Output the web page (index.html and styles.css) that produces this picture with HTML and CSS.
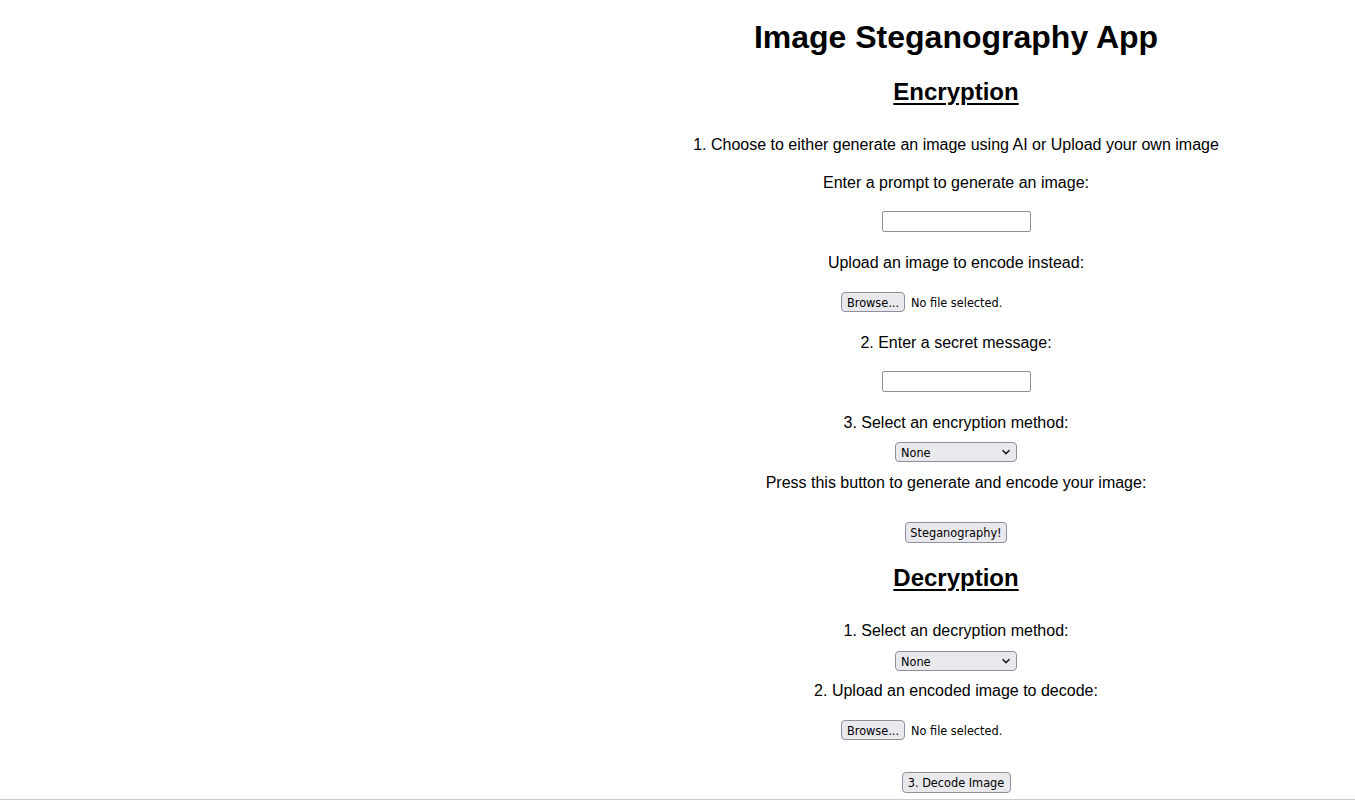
FILE: index.html
```html
<!DOCTYPE html>
<html lang="en">
<head>
<meta charset="utf-8">
<title>Image Steganography App</title>
<link rel="stylesheet" href="styles.css">
</head>
<body>
<div class="page">
  <div class="preview"></div>
  <main class="panel">
    <h1 class="title">Image Steganography App</h1>

    <h2 class="section s-enc">Encryption</h2>
    <p class="txt t1">1. Choose to either generate an image using AI or Upload your own image</p>
    <p class="txt t2">Enter a prompt to generate an image:</p>
    <input class="textbox tb1" type="text">
    <p class="txt t3">Upload an image to encode instead:</p>
    <div class="file f1"><button class="ctl fbtn" type="button">Browse...</button><span class="fname">No file selected.</span></div>
    <p class="txt t4">2. Enter a secret message:</p>
    <input class="textbox tb2" type="text">
    <p class="txt t5">3. Select an encryption method:</p>
    <div class="selwrap sw1">
      <select class="ctl sel"><option>None</option></select>
      <svg class="chev" width="10" height="6" viewBox="0 0 10 6"><path d="M1.5 1.2 L5 4.6 L8.5 1.2" fill="none" stroke="#1c1b22" stroke-width="1.6"/></svg>
    </div>
    <p class="txt t6">Press this button to generate and encode your image:</p>
    <button class="ctl btn b1" type="button">Steganography!</button>

    <h2 class="section s-dec">Decryption</h2>
    <p class="txt t7">1. Select an decryption method:</p>
    <div class="selwrap sw2">
      <select class="ctl sel"><option>None</option></select>
      <svg class="chev" width="10" height="6" viewBox="0 0 10 6"><path d="M1.5 1.2 L5 4.6 L8.5 1.2" fill="none" stroke="#1c1b22" stroke-width="1.6"/></svg>
    </div>
    <p class="txt t8">2. Upload an encoded image to decode:</p>
    <div class="file f2"><button class="ctl fbtn" type="button">Browse...</button><span class="fname">No file selected.</span></div>
    <button class="ctl btn b2" type="button">3. Decode Image</button>
  </main>
</div>
<div class="edge"></div>
</body>
</html>
```

FILE: styles.css
```css
html, body {
  background: #ffffff;
}
body {
  margin: 8px;
  font-family: "Liberation Sans", Arial, sans-serif;
  color: #000000;
}
.page {
  display: grid;
  grid-template-columns: 557px 1fr;
}
.panel {
  display: flex;
  flex-direction: column;
  align-items: center;
  text-align: center;
}
.title {
  margin: 11px 0 0;
  font-size: 32px;
  line-height: 37px;
  font-weight: bold;
}
.section {
  margin: 0;
  font-size: 24px;
  line-height: 28px;
  font-weight: bold;
  text-decoration: underline;
  text-underline-offset: 3px;
}
.s-enc { margin-top: 22px; }
.s-dec { margin-top: 21px; }
.txt {
  margin: 0;
  font-size: 16px;
  line-height: 18px;
}
.t1 { margin-top: 30px; }
.t2 { margin-top: 20px; }
.t3 { margin-top: 22px; }
.t4 { margin-top: 22px; }
.t5 { margin-top: 22px; }
.t6 { margin-top: 12px; }
.t7 { margin-top: 30px; }
.t8 { margin-top: 11px; }

.textbox {
  box-sizing: border-box;
  width: 149px;
  height: 21px;
  margin: 0;
  padding: 1px 2px;
  border: 1px solid #8f8f9d;
  border-radius: 2px;
  background: #ffffff;
  outline: none;
}
.tb1 { margin-top: 19px; }
.tb2 { margin-top: 19px; }

.ctl {
  font-family: "DejaVu Sans Condensed", "DejaVu Sans", sans-serif;
  font-stretch: condensed;
  font-size: 12.6px;
  color: #000000;
  white-space: nowrap;
}
.file {
  width: 230px;
  height: 20px;
  display: flex;
  align-items: center;
  gap: 6px;
}
.f1 { margin-top: 20px; }
.f2 { margin-top: 20px; }
.fbtn {
  box-sizing: border-box;
  width: 64px;
  height: 20px;
  margin: 0;
  padding: 0;
  border: 1px solid #8f8f9d;
  border-radius: 4px;
  background: #e9e9ed;
}
.fname {
  font-family: "DejaVu Sans Condensed", "DejaVu Sans", sans-serif;
  font-stretch: condensed;
  font-size: 12.6px;
  white-space: nowrap;
}
.selwrap {
  position: relative;
  width: 122px;
  height: 20px;
}
.sw1 { margin-top: 10px; }
.sw2 { margin-top: 11px; }
.sel {
  -webkit-appearance: none;
  appearance: none;
  box-sizing: border-box;
  width: 122px;
  height: 20px;
  margin: 0;
  padding: 0 4px 0 5px;
  border: 1px solid #8f8f9d;
  border-radius: 4px;
  background: #e9e9ed;
  text-align: left;
}
.chev {
  position: absolute;
  right: 6px;
  top: 7px;
  pointer-events: none;
}
.btn {
  box-sizing: border-box;
  height: 21px;
  margin: 0;
  padding: 0;
  border: 1px solid #8f8f9d;
  border-radius: 4px;
  background: #e9e9ed;
}
.b1 { margin-top: 30px; width: 102px; }
.b2 { margin-top: 32px; width: 109px; }
.edge {
  position: fixed;
  left: 0;
  right: 0;
  bottom: 0;
  height: 1px;
  background: #cccccc;
}
```
